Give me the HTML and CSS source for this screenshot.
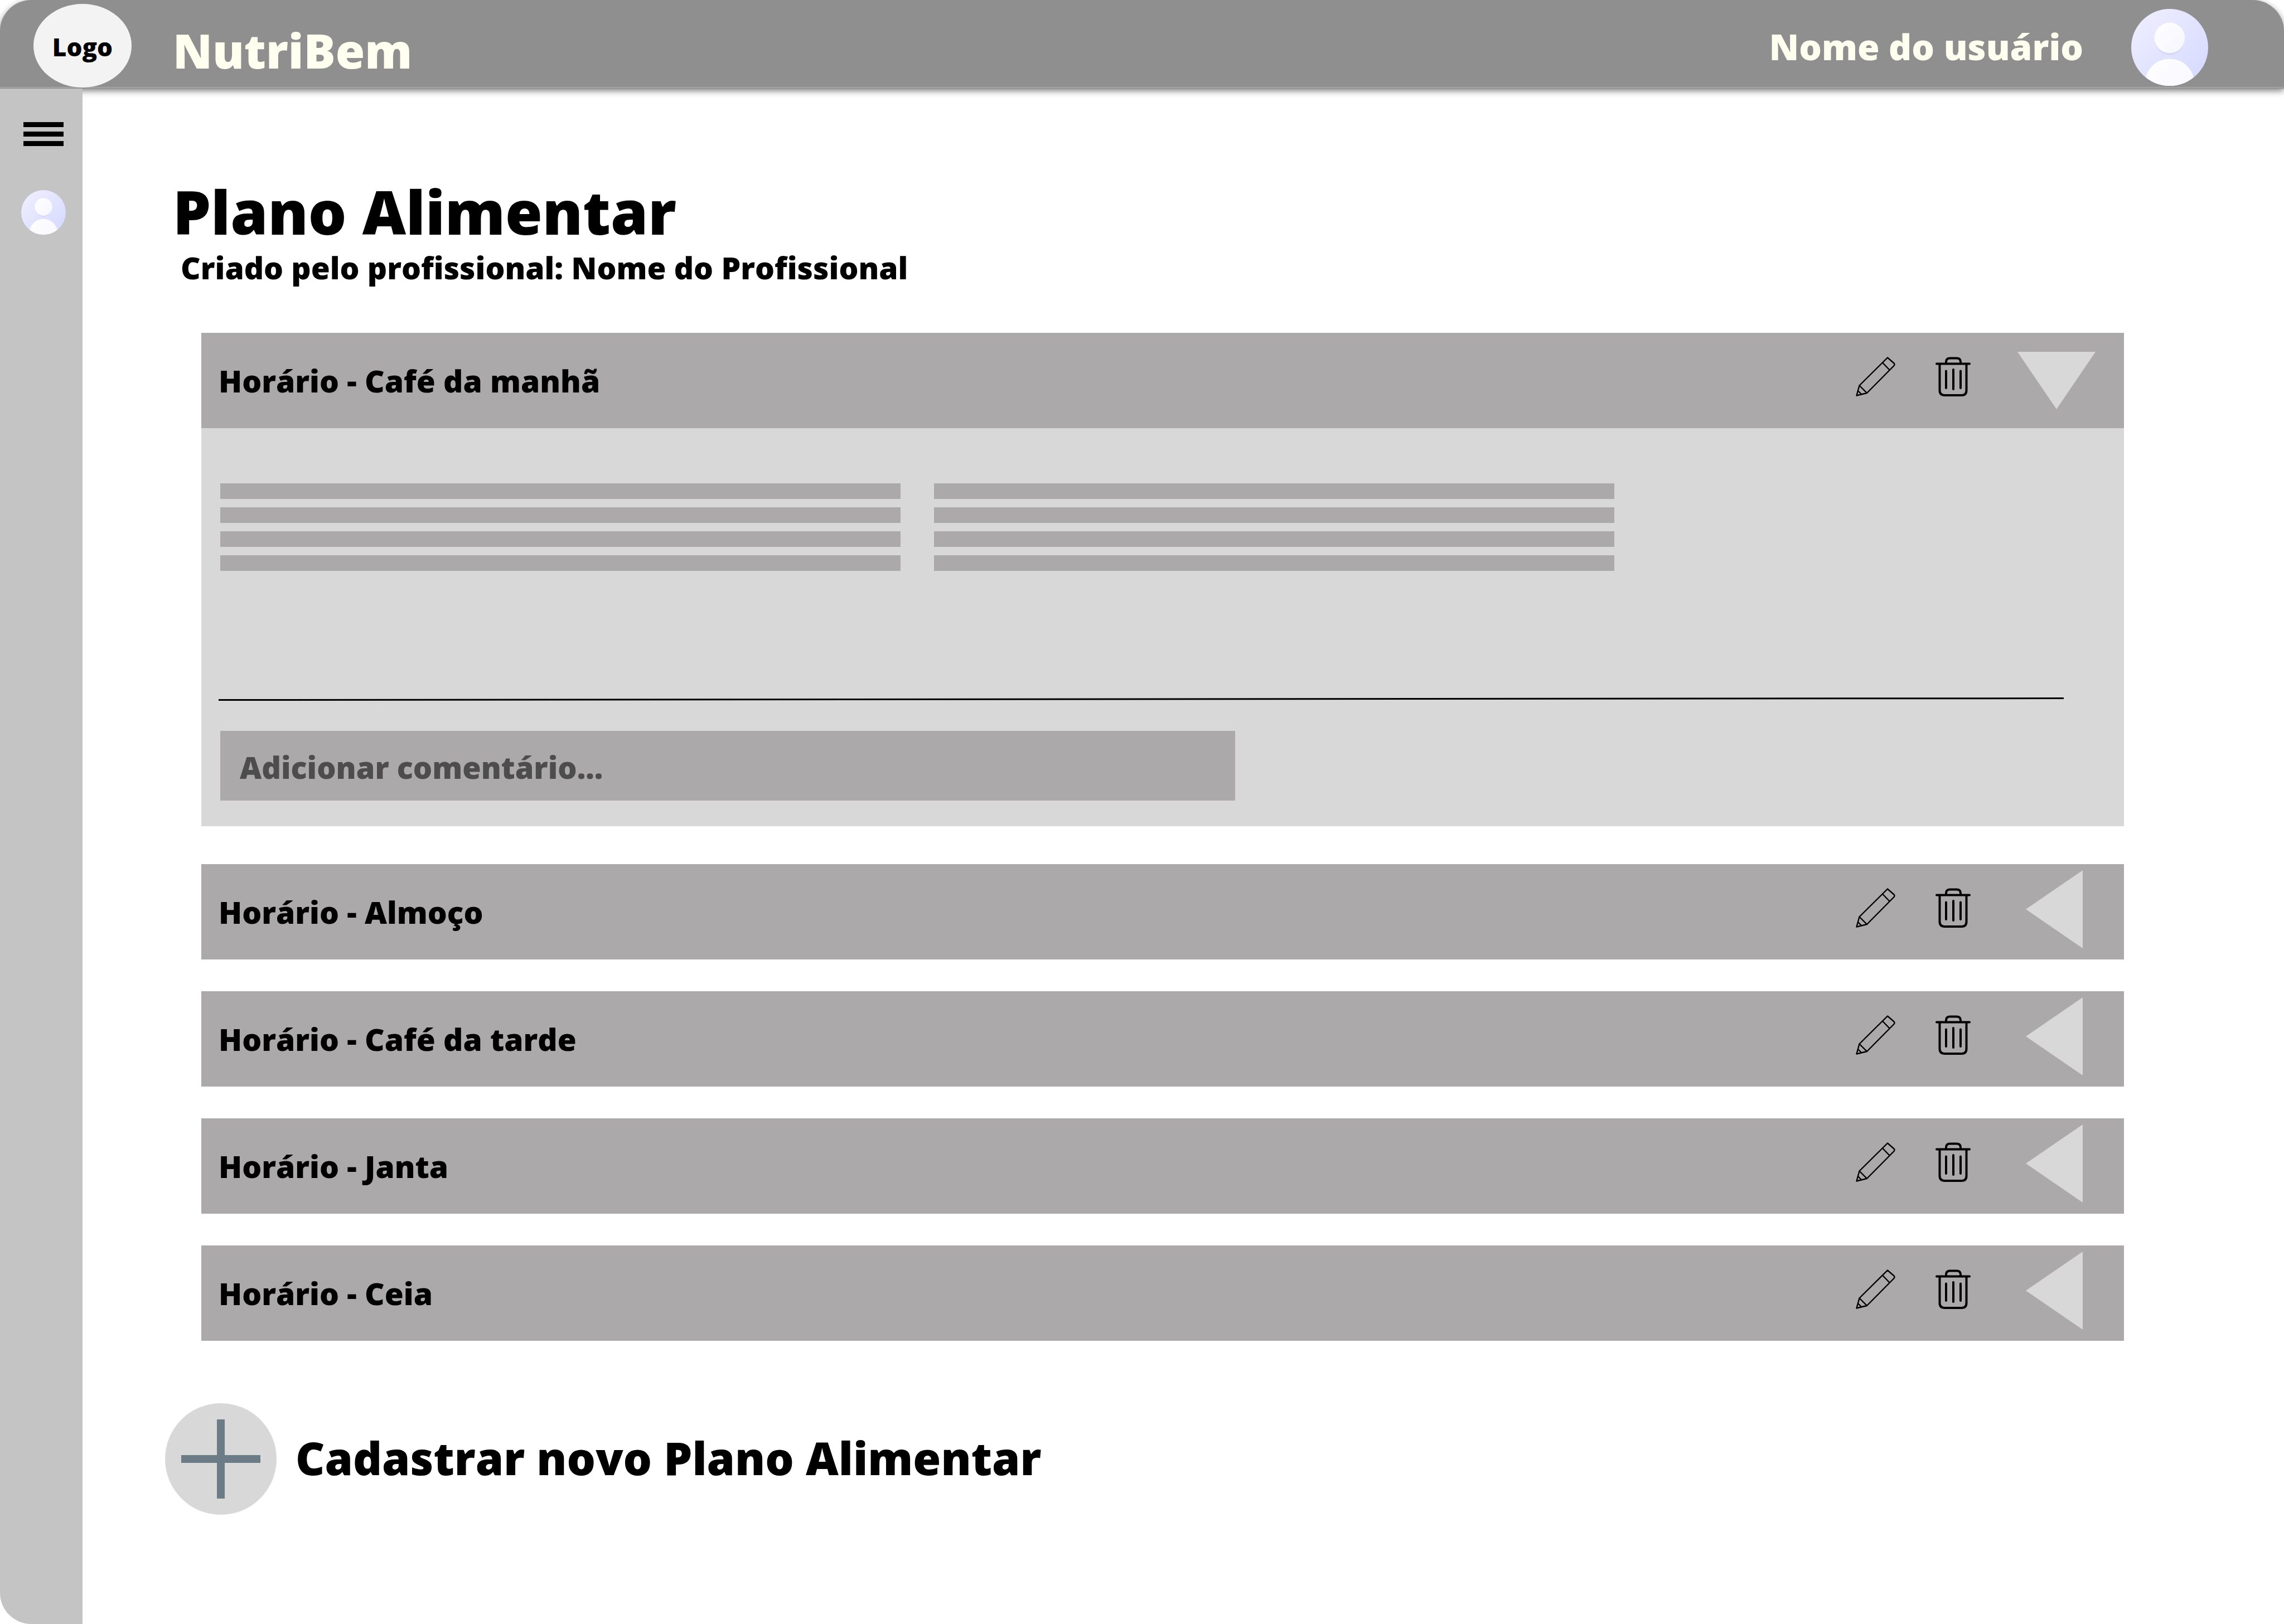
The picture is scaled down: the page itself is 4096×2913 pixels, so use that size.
FILE: index.html
```html
<!DOCTYPE html>
<html lang="pt-BR">
<head>
<meta charset="utf-8">
<title>NutriBem - Plano Alimentar</title>
<link rel="stylesheet" href="styles.css">
</head>
<body>
<svg class="sprite" aria-hidden="true">
  <defs>
    <linearGradient id="avatar-bg" x1="0" y1="0" x2="1" y2="1">
      <stop offset="0" stop-color="#f0f0ff"/>
      <stop offset="1" stop-color="#d4d8ff"/>
    </linearGradient>
    <linearGradient id="avatar-fg" x1="0" y1="0" x2="1" y2="1">
      <stop offset="0" stop-color="#ffffff"/>
      <stop offset="1" stop-color="#f5f5ff"/>
    </linearGradient>
    <clipPath id="avatar-clip"><circle cx="50" cy="50" r="50"/></clipPath>
  </defs>
  <symbol id="avatar" viewBox="0 0 100 100">
    <g clip-path="url(#avatar-clip)">
      <rect width="100" height="100" fill="url(#avatar-bg)"/>
      <ellipse cx="50" cy="40" rx="19" ry="20" fill="#d5d8fb"/>
      <circle cx="50" cy="37.6" r="19.8" fill="url(#avatar-fg)"/>
      <circle cx="50" cy="97" r="32.2" fill="url(#avatar-fg)"/>
    </g>
  </symbol>
  <symbol id="pencil" viewBox="0 0 71 71">
    <g fill="none" stroke="#000" stroke-width="2.4" stroke-linejoin="round">
      <path d="M1.500 69.500 6.500 51.500 57 1.500 68.500 11.500Q70.500 13.500 68.500 16L20 65Z"/>
      <path d="M6.500 51.500 20 65M4 61 10 67M47.500 10 60.500 23.500"/>
    </g>
  </symbol>
  <symbol id="trash" viewBox="0 0 64 71">
    <g fill="none" stroke="#000" stroke-width="4" stroke-linecap="round">
      <path d="M2 12.500H61"/>
      <path d="M19 12V9Q19 2.500 26 2.500H38Q45 2.500 45 9V12"/>
      <path d="M7.500 13V60Q7.500 69 16.500 69H47Q55.500 69 55.500 60V13"/>
      <path d="M19 25.500V56M32 23V58M45 25.500V56"/>
    </g>
  </symbol>
  <symbol id="arrow-down" viewBox="0 0 140 140"><path d="M0 23H140L70 126Z" fill="#d8d8d8"/></symbol>
  <symbol id="arrow-left" viewBox="0 0 140 140"><path d="M117 0V140L15 70Z" fill="#d8d8d8"/></symbol>
</svg>

<header class="topbar">
  <a class="logo" href="#">Logo</a>
  <span class="brand">NutriBem</span>
  <span class="user-name">Nome do usuário</span>
  <svg class="user-avatar" role="img" aria-label="Foto do usuário"><use href="#avatar"/></svg>
</header>

<div class="layout">
  <nav class="sidebar" aria-label="Menu principal">
    <button class="icon-button" type="button" aria-label="Abrir menu">
      <svg class="menu-icon" viewBox="0 0 72 43"><path d="M0 0H72V9H0ZM0 17H72V26H0ZM0 34H72V43H0Z"/></svg>
    </button>
    <a class="profile-link" href="#" aria-label="Perfil"><svg class="profile-icon"><use href="#avatar"/></svg></a>
  </nav>

  <main class="content">
    <h1 class="page-title">Plano Alimentar</h1>
    <p class="page-author">Criado pelo profissional: Nome do Profissional</p>

    <div class="meals">
      <section class="meal meal-open">
        <div class="meal-header">
          <h2 class="meal-title">Horário - Café da manhã</h2>
          <button class="icon-button" type="button" aria-label="Editar"><svg class="pencil-icon"><use href="#pencil"/></svg></button>
          <button class="icon-button" type="button" aria-label="Excluir"><svg class="trash-icon"><use href="#trash"/></svg></button>
          <button class="toggle" type="button" aria-label="Recolher" aria-expanded="true"><svg class="toggle-icon"><use href="#arrow-down"/></svg></button>
        </div>
        <div class="meal-body">
          <div class="columns">
            <div class="lines"><span class="line"></span><span class="line"></span><span class="line"></span><span class="line"></span></div>
            <div class="lines"><span class="line"></span><span class="line"></span><span class="line"></span><span class="line"></span></div>
          </div>
          <svg class="divider" viewBox="0 0 3309 6" preserveAspectRatio="none" aria-hidden="true"><path d="M0 4.500 3309 1.500" stroke="#000" stroke-width="3"/></svg>
          <input class="comment" type="text" placeholder="Adicionar comentário..." aria-label="Adicionar comentário">
        </div>
      </section>
      <section class="meal">
        <div class="meal-header">
          <h2 class="meal-title">Horário - Almoço</h2>
          <button class="icon-button" type="button" aria-label="Editar"><svg class="pencil-icon"><use href="#pencil"/></svg></button>
          <button class="icon-button" type="button" aria-label="Excluir"><svg class="trash-icon"><use href="#trash"/></svg></button>
          <button class="toggle" type="button" aria-label="Expandir" aria-expanded="false"><svg class="toggle-icon"><use href="#arrow-left"/></svg></button>
        </div>
      </section>
      <section class="meal">
        <div class="meal-header">
          <h2 class="meal-title">Horário - Café da tarde</h2>
          <button class="icon-button" type="button" aria-label="Editar"><svg class="pencil-icon"><use href="#pencil"/></svg></button>
          <button class="icon-button" type="button" aria-label="Excluir"><svg class="trash-icon"><use href="#trash"/></svg></button>
          <button class="toggle" type="button" aria-label="Expandir" aria-expanded="false"><svg class="toggle-icon"><use href="#arrow-left"/></svg></button>
        </div>
      </section>
      <section class="meal">
        <div class="meal-header">
          <h2 class="meal-title">Horário - Janta</h2>
          <button class="icon-button" type="button" aria-label="Editar"><svg class="pencil-icon"><use href="#pencil"/></svg></button>
          <button class="icon-button" type="button" aria-label="Excluir"><svg class="trash-icon"><use href="#trash"/></svg></button>
          <button class="toggle" type="button" aria-label="Expandir" aria-expanded="false"><svg class="toggle-icon"><use href="#arrow-left"/></svg></button>
        </div>
      </section>
      <section class="meal">
        <div class="meal-header">
          <h2 class="meal-title">Horário - Ceia</h2>
          <button class="icon-button" type="button" aria-label="Editar"><svg class="pencil-icon"><use href="#pencil"/></svg></button>
          <button class="icon-button" type="button" aria-label="Excluir"><svg class="trash-icon"><use href="#trash"/></svg></button>
          <button class="toggle" type="button" aria-label="Expandir" aria-expanded="false"><svg class="toggle-icon"><use href="#arrow-left"/></svg></button>
        </div>
      </section>
    </div>

    <button class="add-plan" type="button">
      <svg class="add-icon" viewBox="0 0 200 200" aria-hidden="true"><circle cx="100" cy="100" r="100" fill="#d8d8d8"/><path d="M100 29V171M29 100H171" stroke="#6b7c87" stroke-width="14"/></svg>
      <span class="add-label">Cadastrar novo Plano Alimentar</span>
    </button>
  </main>
</div>
</body>
</html>
```
FILE: styles.css
```css
*, *::before, *::after { box-sizing: border-box; }

body {
  margin: 0;
  min-height: 100vh;
  display: flex;
  flex-direction: column;
  background: #fff;
  color: #000;
  font-family: "Open Sans", "Noto Sans", sans-serif;
  font-weight: 800;
}

h1, h2, p { margin: 0; font-weight: inherit; }
svg { display: block; }
a { color: inherit; text-decoration: none; }
button {
  border: 0;
  padding: 0;
  background: none;
  color: inherit;
  font: inherit;
  cursor: pointer;
}

.sprite { position: absolute; width: 0; height: 0; }

/* Top bar */
.topbar {
  display: flex;
  align-items: center;
  height: 159px;
  padding: 6px 136px 0 60px;
  border-bottom: 2px solid #939393;
  border-radius: 56px 56px 0 0;
  background: #8f8f8f;
  box-shadow: inset 0 -1px #b0b0b0, 0 4px 12px rgba(0, 0, 0, .5);
  color: #fffff0;
}

.logo {
  display: flex;
  align-items: center;
  justify-content: center;
  width: 176px;
  height: 150px;
  padding-top: 4px;
  border-radius: 50%;
  background: #f3f3f3;
  color: #000;
  font-size: 44px;
}

.brand { margin-left: 74px; padding-top: 16px; font-size: 85px; line-height: 120px; }
.user-name { margin-left: auto; padding-top: 4px; font-size: 64px; line-height: 88px; }
.user-avatar { align-self: flex-end; width: 138px; height: 138px; margin: 0 0 3px 86px; }

/* Page frame */
.layout { position: relative; flex: 1; display: flex; }

.sidebar {
  display: flex;
  flex-direction: column;
  align-items: center;
  gap: 79px;
  width: 148px;
  padding: 60px 0 0 8px;
  border-radius: 0 0 0 56px;
  background: #c4c4c4;
}

.menu-icon { width: 72px; height: 43px; }
.profile-icon { width: 80px; height: 80px; }

.content {
  flex: 1;
  display: flex;
  flex-direction: column;
  align-items: flex-start;
  padding: 147px 287px 196px 148px;
}

.page-title { margin-left: 14px; font-size: 108px; line-height: 148px; }
.page-author { margin-left: 28px; font-size: 55px; line-height: 52px; }

/* Meals */
.meals {
  align-self: stretch;
  display: flex;
  flex-direction: column;
  gap: 57px;
  margin: 91px 0 112px 65px;
}

.meal-open { margin-bottom: 11px; }

.meal-header {
  display: flex;
  align-items: center;
  height: 171px;
  padding: 0 51px 0 31px;
  background: #aba9aa;
}

.meal-title { flex: 1; padding-top: 1px; font-size: 55px; line-height: 76px; }
.meal-header .icon-button { margin-right: 72px; padding-bottom: 14px; }
.meal-header .toggle { margin-left: 11px; padding-bottom: 9px; }
.pencil-icon { width: 71px; height: 71px; }
.trash-icon { width: 64px; height: 71px; }
.toggle-icon { width: 140px; height: 140px; }

.meal-body {
  padding: 99px 108px 46px 31px;
  background: #d8d8d8;
}

.columns {
  display: grid;
  grid-template-columns: 1220px 1220px;
  gap: 60px;
  margin-left: 3px;
}

.lines { display: grid; gap: 15px; }
.line { height: 28px; background: #aba9aa; }
.divider { width: 100%; height: 6px; margin: 227px 0 54px; }

.comment {
  display: block;
  width: 1820px;
  height: 125px;
  margin-left: 3px;
  padding: 4px 35px 0;
  border: 0;
  background: #aba9aa;
  color: #4d4d4d;
  font: inherit;
  font-size: 54px;
}

.comment::placeholder { color: #4d4d4d; opacity: 1; }

/* New plan */
.add-plan {
  display: flex;
  align-items: center;
  gap: 34px;
  font-size: 81px;
  line-height: 116px;
}

.add-icon { width: 200px; height: 200px; }
.add-label { padding-bottom: 4px; }
```
